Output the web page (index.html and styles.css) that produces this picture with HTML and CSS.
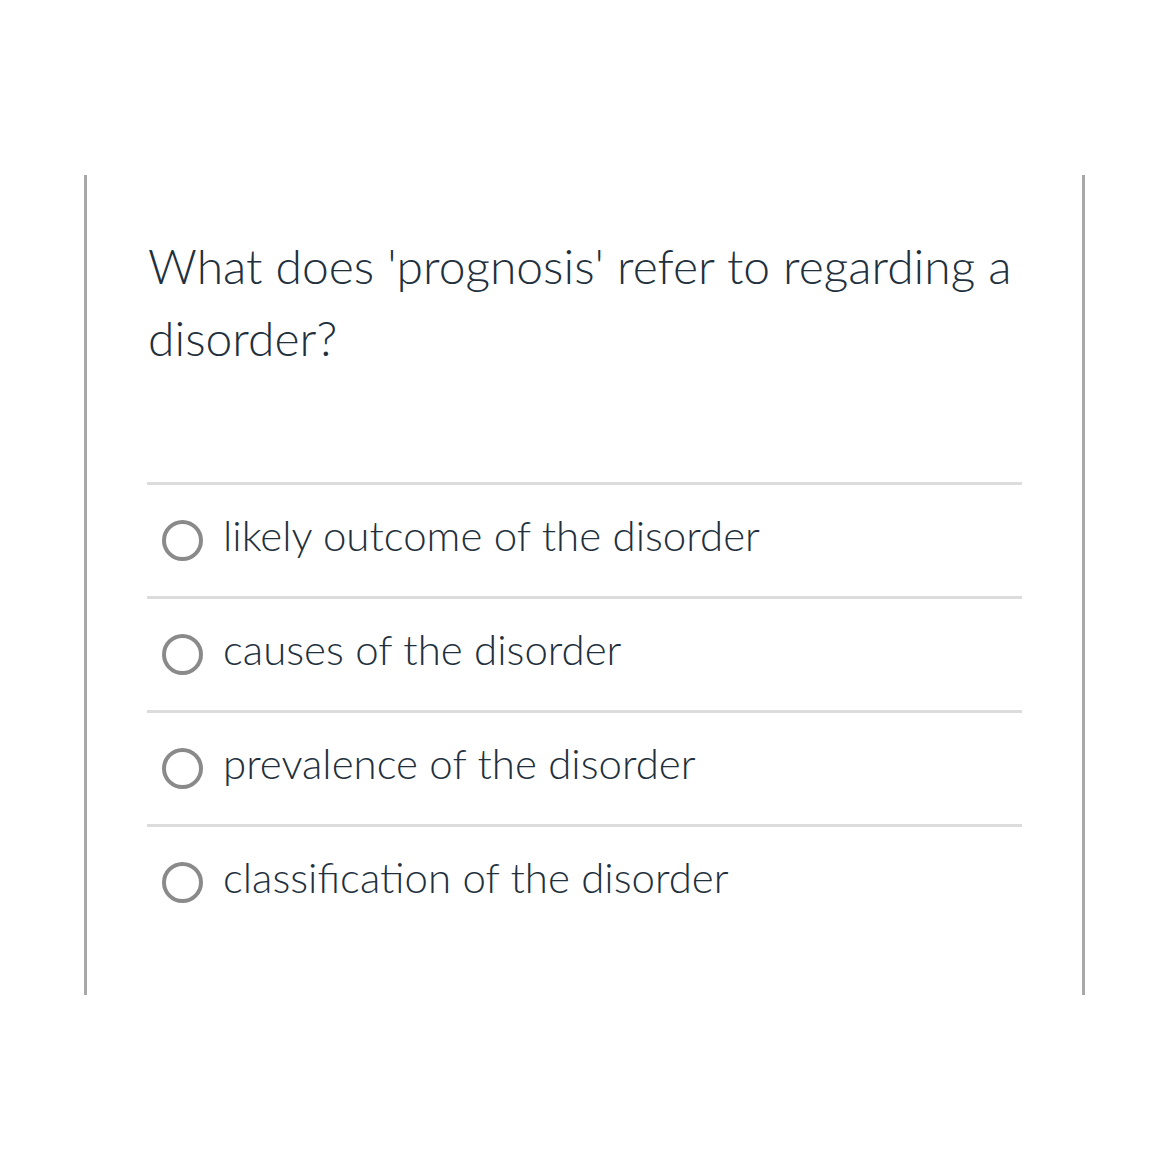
FILE: index.html
```html
<!DOCTYPE html>
<html>
<head>
<meta charset="utf-8">
<link rel="stylesheet" href="styles.css">
</head>
<body>
<div class="quiz">
  <div class="question">What does 'prognosis' refer to regarding a disorder?</div>
  <ul class="answers">
    <li class="answer"><span class="radio"></span><span class="label">likely outcome of the disorder</span></li>
    <li class="answer"><span class="radio"></span><span class="label">causes of the disorder</span></li>
    <li class="answer"><span class="radio"></span><span class="label">prevalence of the disorder</span></li>
    <li class="answer"><span class="radio"></span><span class="label">classification of the disorder</span></li>
  </ul>
</div>
</body>
</html>
```
FILE: styles.css
```css
html, body {
  margin: 0;
  padding: 0;
  background: #fff;
}
body {
  font-family: Lato, "Liberation Sans", sans-serif;
  font-weight: 300;
  color: #22303d;
}
.quiz {
  margin: 175px 0 0 84px;
  width: 875px;
  height: 820px;
  padding: 0 60px;
  border-left: 3px solid #a8a8a8;
  border-right: 3px solid #a8a8a8;
  box-sizing: content-box;
}
.question {
  padding-top: 55px;
  padding-left: 1px;
  font-size: 48px;
  line-height: 72px;
  margin-bottom: 108px;
}
.answers {
  list-style: none;
  margin: 0;
  padding: 0;
}
.answer {
  display: flex;
  align-items: center;
  gap: 20px;
  height: 111px;
  padding-left: 15px;
  border-top: 3px solid #dcdcdc;
}
.radio {
  width: 33px;
  height: 33px;
  border: 4px solid #8a8a8a;
  border-radius: 50%;
  flex: none;
}
.label {
  font-size: 42px;
  position: relative;
  top: -6px;
}
```
